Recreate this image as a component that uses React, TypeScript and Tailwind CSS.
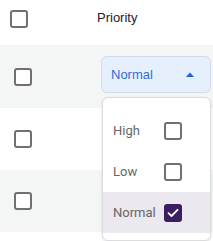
import React from 'react';

function Box({ checked = false, className = '' }: { checked?: boolean; className?: string }) {
  return checked ? (
    <span className={`flex h-[18px] w-[18px] items-center justify-center rounded-[3px] bg-[#3b1f63] ${className}`}>
      <svg width="12" height="10" viewBox="0 0 12 10" fill="none">
        <path d="M1.5 5.2 4.5 8 10.5 1.8" stroke="white" strokeWidth="1.8" strokeLinecap="round" strokeLinejoin="round" />
      </svg>
    </span>
  ) : (
    <span className={`block h-[18px] w-[18px] rounded-[3px] border-2 border-[#707070] bg-white ${className}`} />
  );
}

const options = ['High', 'Low', 'Normal'];

export default function App() {
  return (
    <div className="relative h-[241px] w-[213px] overflow-hidden bg-white" style={{ fontFamily: '"Liberation Sans", Arial, sans-serif' }}>
      <div className="flex h-[45px] items-start">
        <div className="w-[97px] pl-[10px] pt-[10px]">
          <Box className="h-[17px] w-[17px]" />
        </div>
        <span className="pt-[8px] text-[13px] text-[#222]">Priority</span>
      </div>
      <div className="flex h-[63px] items-center bg-[#f4f6f6] pl-[14px]">
        <Box />
      </div>
      <div className="flex h-[62px] items-center bg-white pl-[14px]">
        <Box />
      </div>
      <div className="flex h-[62px] items-center bg-[#f4f6f6] pl-[14px]">
        <Box />
      </div>

      <div className="absolute left-[101px] top-[56px] flex h-[37px] w-[110px] items-center justify-between rounded-[6px] border border-[#d3dbe6] bg-[#e6effc] pl-[9px] pr-[16px]">
        <span className="text-[13px] text-[#2f6fd6]">Normal</span>
        <svg width="8" height="5" viewBox="0 0 8 5">
          <path d="M0 5 4 0.5 8 5Z" fill="#1f66d1" />
        </svg>
      </div>

      <div className="absolute left-[102px] top-[97px] w-[109px] rounded-[6px] border border-[#dcdcdc] bg-white pb-[7px] pt-[12px] shadow-[0_1px_3px_rgba(0,0,0,0.12)]">
        {options.map((o) => (
          <div key={o} className={`flex h-[41px] items-center pl-[10px] ${o === 'Normal' ? 'bg-[#ebe8ef]' : ''}`}>
            <span className="w-[51px] text-[13px] text-[#666]" style={{ fontFamily: 'Roboto, sans-serif' }}>{o}</span>
            <Box checked={o === 'Normal'} />
          </div>
        ))}
      </div>
    </div>
  );
}
